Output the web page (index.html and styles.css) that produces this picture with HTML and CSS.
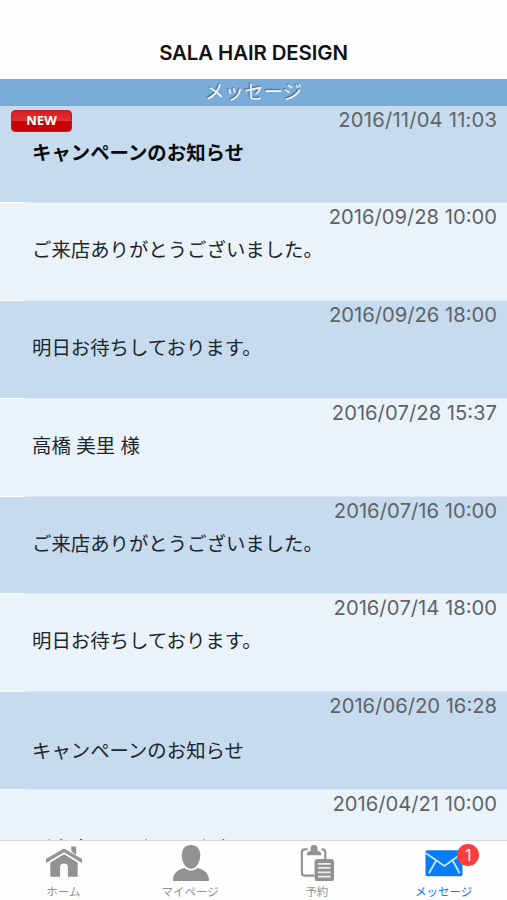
FILE: index.html
```html
<!DOCTYPE html>
<html lang="ja">
<head>
    <meta charset="UTF-8">
    <meta name="viewport" content="width=device-width, initial-scale=1.0">
    <title>SALA HAIR DESIGN</title>
    <link rel="stylesheet" href="styles.css">
</head>
<body>
    <div class="app">
        <header class="header">
            <h1>SALA HAIR DESIGN</h1>
        </header>
        <h2 class="section-title">メッセージ</h2>

        <main class="message-list">
            <article class="message unread">
                <div class="message-top"><span class="new-badge">NEW</span><time>2016/11/04 11:03</time></div>
                <p>キャンペーンのお知らせ</p>
            </article>
            <article class="message">
                <div class="message-top"><time>2016/09/28 10:00</time></div>
                <p>ご来店ありがとうございました。</p>
            </article>
            <article class="message">
                <div class="message-top"><time>2016/09/26 18:00</time></div>
                <p>明日お待ちしております。</p>
            </article>
            <article class="message">
                <div class="message-top"><time>2016/07/28 15:37</time></div>
                <p>高橋 美里 様</p>
            </article>
            <article class="message">
                <div class="message-top"><time>2016/07/16 10:00</time></div>
                <p>ご来店ありがとうございました。</p>
            </article>
            <article class="message">
                <div class="message-top"><time>2016/07/14 18:00</time></div>
                <p>明日お待ちしております。</p>
            </article>
            <article class="message low">
                <div class="message-top"><time>2016/06/20 16:28</time></div>
                <p>キャンペーンのお知らせ</p>
            </article>
            <article class="message low">
                <div class="message-top"><time>2016/04/21 10:00</time></div>
                <p>ご来店ありがとうございました。</p>
            </article>
        </main>

        <nav class="tab-bar">
            <a class="tab">
                <svg class="icon" viewBox="0 0 40 40">
                    <path d="M28 2.500h5v9l-5-4z"/>
                    <path d="M20.500 4.500 2 15.500v4L20.500 8.500l18.500 11v-4z"/>
                    <path d="M20.500 10.500 6.500 19v14.500h10V24a4 4 0 0 1 8 0v9.500h10V19z"/>
                </svg>
                <span>ホーム</span>
            </a>
            <a class="tab">
                <svg class="icon" viewBox="0 0 40 40">
                    <path d="M20.500 1c6 0 9.500 4 9.500 10.500S26 25.500 20.500 25.500 11 18 11 11.500 14.500 1 20.500 1z"/>
                    <path d="M2 38c0-7.500 4-11.500 12-13.500 4 3.700 9 3.700 13 0 8 2 12 6 12 13.500z"/>
                </svg>
                <span>マイページ</span>
            </a>
            <a class="tab">
                <svg class="icon" viewBox="0 0 40 40">
                    <path class="line" d="M11 5.500H8a3 3 0 0 0-3 3v21a3 3 0 0 0 3 3h10M25 5.500h1a3 3 0 0 1 3 3v7"/>
                    <path d="M10 11.500c0-3 1.500-4 4-4.500V4.500a3.500 3.500 0 0 1 7 0V7c2.500.5 4 1.500 4 4.500z"/>
                    <rect x="18" y="15.500" width="20" height="22.500" rx="3"/>
                    <path class="rule" d="M21.500 20.500h13M21.500 24.500h13M21.500 29h13M21.500 33.500h13"/>
                </svg>
                <span>予約</span>
            </a>
            <a class="tab active">
                <svg class="icon" viewBox="0 0 40 40">
                    <rect x="1.500" y="6.500" width="38" height="26.500" rx="2"/>
                    <path class="fold" d="M2 9.500l19 13 18-13M12.500 17 5 30M29.500 17l7 13"/>
                </svg>
                <span class="count">1</span>
                <span>メッセージ</span>
            </a>
        </nav>
    </div>
</body>
</html>
```

FILE: styles.css
```css
* {
    margin: 0;
    padding: 0;
    box-sizing: border-box;
}

body {
    font-family: Inter, "Noto Sans CJK JP", sans-serif;
    background: #fff;
    overflow: hidden;
}

.app {
    height: 900px;
    display: flex;
    flex-direction: column;
}

.header {
    height: 79px;
    flex: none;
    padding-top: 37px;
    background: #fefefe;
    text-align: center;
}

.header h1 {
    font-size: 20.400px;
    line-height: 31px;
    font-weight: 600;
    letter-spacing: -0.1px;
    color: #111;
}

.section-title {
    height: 26.700px;
    flex: none;
    background: #7aacd9;
    color: #f3f8fd;
    font-size: 19.5px;
    line-height: 27px;
    font-weight: 400;
    text-align: center;
    text-shadow: -1px -1px 1px #4d6477;
}

.message-list {
    flex: 1;
    min-height: 0;
    overflow: hidden;
}

.message {
    height: 97.72px;
    background: linear-gradient(to right, #fcfeff 25px, #dce7f3 25px) bottom / 100% 1px no-repeat #ebf3fa;
}

.message:nth-child(odd) {
    background-color: #c6dbee;
}

.message-top {
    height: 27px;
    padding: 0 10px 0 11px;
    display: flex;
    align-items: center;
    color: #5f6367;
}

.message time {
    margin-left: auto;
    font-size: 20.200px;
    line-height: 27px;
    font-kerning: none;
}

.message p {
    padding: 6px 32px 0;
    font-size: 19.4px;
    line-height: 29px;
    color: #1c252d;
}

.message.low p {
    padding-top: 17.500px;
}

.message.low:last-child p {
    padding-top: 18.300px;
}

.message.unread p {
    font-weight: 700;
    color: #070b0f;
}

.message.unread time {
    letter-spacing: 0.2px;
    margin-right: -0.2px;
}

.new-badge {
    width: 61px;
    height: 22px;
    margin-top: 3px;
    border: 1px solid #ba2029;
    border-radius: 4px;
    background: linear-gradient(#d91c20 0, #df3438 50%, #cc0005 50%, #c70003 100%);
    color: #fff;
    font: 700 13px/19px "Open Sans", sans-serif;
    text-align: center;
}

.tab-bar {
    height: 60px;
    flex: none;
    display: grid;
    grid-template-columns: repeat(4, 1fr);
    border-top: 1px solid #d6dade;
    background: #fefefe;
}

.tab {
    position: relative;
    display: flex;
    flex-direction: column;
    align-items: center;
    padding-top: 3px;
    color: #929292;
    font-size: 11.500px;
    line-height: 18px;
}

.icon {
    width: 39px;
    height: 39px;
    fill: currentColor;
}

.line,
.rule,
.fold {
    fill: none;
    stroke: currentColor;
    stroke-width: 2.200;
}

.rule {
    stroke: #ededed;
    stroke-width: 1.800;
}

.fold {
    stroke: #cce4ff;
    stroke-width: 1.900;
}

.tab.active {
    color: #087df8;
}

.count {
    position: absolute;
    top: 3px;
    left: 77px;
    width: 22px;
    height: 22px;
    border-radius: 50%;
    background: #fc3d39;
    color: #fff;
    font-size: 16px;
    line-height: 22px;
    text-align: center;
}
```
